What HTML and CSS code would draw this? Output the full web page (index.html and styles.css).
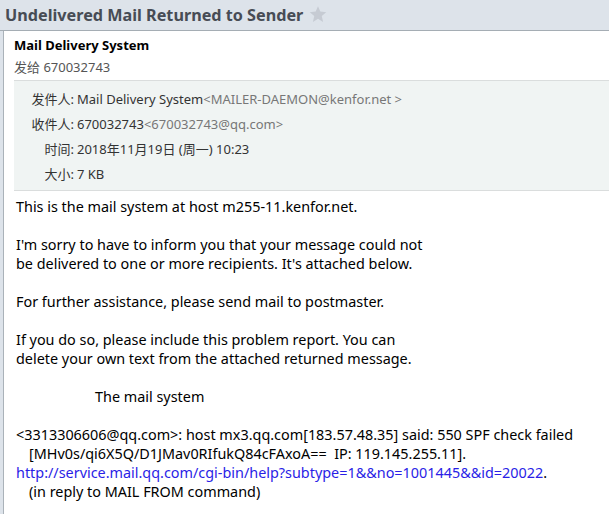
FILE: index.html
```html
<!DOCTYPE html>
<html>
<head>
<meta charset="utf-8">
<link rel="stylesheet" href="styles.css">
</head>
<body>
<div class="page">
  <div class="titlebar">
    <h1 class="title">Undelivered Mail Returned to Sender</h1>
    <svg class="star" width="18" height="18" viewBox="0 0 24 24"><path d="M12 1.5l3.1 7.3 7.9.7-6 5.2 1.8 7.8L12 18.4l-6.8 4.1 1.8-7.8-6-5.2 7.9-.7z" fill="#c6cbd3"/></svg>
  </div>
  <div class="panel">
    <div class="head">
      <div class="sender">Mail Delivery System</div>
      <div class="to">发给 670032743</div>
    </div>
    <div class="meta">
      <div class="row"><span class="label">发件人:</span><span class="val">Mail Delivery System<span class="addr">&lt;MAILER-DAEMON@kenfor.net &gt;</span></span></div>
      <div class="row"><span class="label">收件人:</span><span class="val">670032743<span class="addr">&lt;670032743@qq.com&gt;</span></span></div>
      <div class="row"><span class="label">时间:</span><span class="val">2018年11月19日 (周一) 10:23</span></div>
      <div class="row"><span class="label">大小:</span><span class="val">7 KB</span></div>
    </div>
    <div class="body">
<p>This is the mail system at host m255-11.kenfor.net.</p>
<p>I'm sorry to have to inform you that your message could not<br>be delivered to one or more recipients. It's attached below.</p>
<p>For further assistance, please send mail to postmaster.</p>
<p>If you do so, please include this problem report. You can<br>delete your own text from the attached returned message.</p>
<p class="sig">The mail system</p>
<p>&lt;3313306606@qq.com&gt;: host mx3.qq.com[183.57.48.35] said: 550 SPF check failed<br><span class="ind">[MHv0s/qi6X5Q/D1JMav0RIfukQ84cFAxoA==&nbsp; IP: 119.145.255.11].</span><br><a class="link" href="#">http://service.mail.qq.com/cgi-bin/help?subtype=1&amp;&amp;no=1001445&amp;&amp;id=20022</a>.<br><span class="ind">(in reply to MAIL FROM command)</span></p>
    </div>
  </div>
</div>
</body>
</html>
```
FILE: styles.css
```css
html, body {
  margin: 0;
  padding: 0;
}
body {
  background: #dde3ea;
  font-family: "Noto Sans", "Noto Sans CJK SC", sans-serif;
  overflow: hidden;
}
.page {
  width: 609px;
  height: 514px;
  display: flex;
  flex-direction: column;
}
.titlebar {
  flex-shrink: 0;
  display: flex;
  align-items: center;
  padding-left: 5px;
  gap: 6px;
  border-bottom: 1px solid #a5adb4;
  box-sizing: border-box;
  height: 31px;
}
.title {
  margin: 0;
  font-size: 16.2px;
  font-weight: bold;
  color: #474c55;
  line-height: 24px;
}
.star {
  margin-top: -2px;
}
.panel {
  flex: 1;
  margin-left: 3px;
  border-left: 1px solid #aab2b9;
  background: #fff;
}
.head {
  padding: 5px 0 0 10px;
  height: 44px;
}
.sender {
  font-size: 13px;
  font-weight: bold;
  color: #000;
  line-height: 18px;
}
.to {
  margin-top: 3px;
  font-size: 13px;
  color: #555;
  line-height: 20px;
}
.meta {
  margin-left: 10px;
  background: #f0f4f3;
  border-top: 1px solid #dadddd;
  border-bottom: 1px solid #dadddd;
  padding: 5px 0 4px;
}
.row {
  display: flex;
  height: 25px;
  align-items: center;
  font-size: 13px;
  color: #333;
}
.label {
  width: 60px;
  text-align: right;
}
.val {
  padding-left: 3px;
}
.addr {
  color: #777;
}
.body {
  padding: 6px 0 0 12px;
  font-size: 14.4px;
  line-height: 19px;
  color: #000;
}
.body p {
  margin: 0 0 19px;
}
.sig {
  padding-left: 79px;
}
.ind {
  padding-left: 13px;
}
.link {
  color: #2a1ee6;
  text-decoration: none;
}
```
